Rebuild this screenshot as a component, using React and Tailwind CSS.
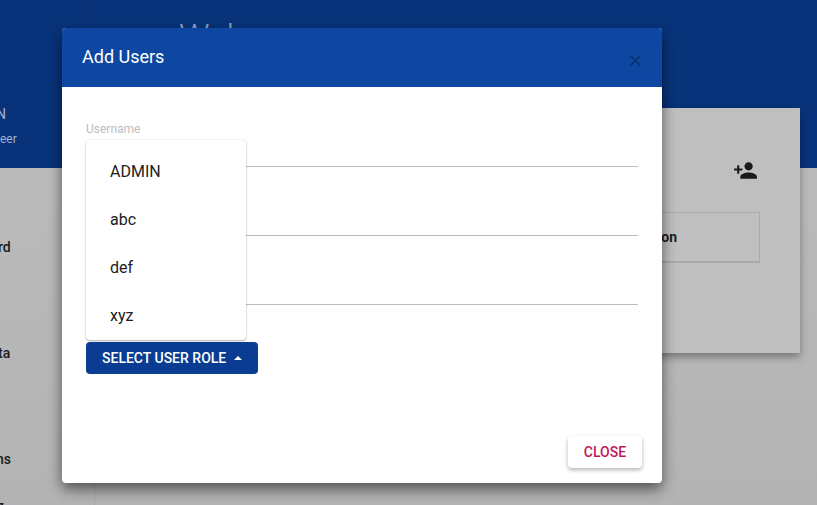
import React from "react";
import { MdPersonAdd, MdClose } from "react-icons/md";

function SideText({ className, children }) {
  return <p className={`absolute left-0 whitespace-nowrap ${className}`}>{children}</p>;
}

function InputLine({ label }) {
  return (
    <div className="h-[69px] flex flex-col justify-end">
      {label && <label className="text-xs leading-4 text-[#bdbdbd] mb-[29px]">{label}</label>}
      <div className="h-px bg-[#bdbdbd]" />
    </div>
  );
}

function RoleMenu() {
  const roles = ["ADMIN", "abc", "def", "xyz"];
  return (
    <ul className="absolute left-[24px] top-[53px] w-[160px] pt-2 bg-white rounded-sm shadow-[0_1px_2px_rgba(0,0,0,0.3),0_0_3px_rgba(0,0,0,0.08)]">
      {roles.map((role) => (
        <li key={role} className="h-[48px] flex items-center pl-6 text-base text-[#212121]">
          {role}
        </li>
      ))}
    </ul>
  );
}

export default function App() {
  return (
    <div className="relative h-[505px] overflow-hidden bg-gradient-to-b from-[#bfbfbf] to-[#b3b3b3] font-['Roboto',sans-serif]">
      {/* Page under the backdrop */}
      <header className="h-[168px] bg-[#08337a] flex">
        <div className="w-[95px] border-r border-[#0a2f6e]" />
        <h1 className="ml-[84px] mt-[16px] text-[34px] leading-10 font-light text-[#8fa3c4]">Wel</h1>
      </header>

      <aside className="absolute left-0 top-[168px] bottom-0 w-[95px] border-r border-[#a8a8a8] text-sm text-[#1c1c1c]">
        <SideText className="-top-[64px] -ml-[4px] text-[#9fb2d2]">N</SideText>
        <SideText className="-top-[37px] text-xs leading-4 text-[#9fb2d2]">eer</SideText>
        <SideText className="top-[69px] -ml-[2px] font-medium">rd</SideText>
        <SideText className="top-[175px] -ml-[2px] font-medium">ta</SideText>
        <SideText className="top-[281px] -ml-[4px] font-medium">ns</SideText>
        <SideText className="top-[328px] -ml-[3px] font-medium">z</SideText>
      </aside>

      <section className="absolute left-[96px] top-[108px] w-[704px] h-[245px] bg-[#bfbfbf] shadow-[0_4px_8px_rgba(0,0,0,0.35)] flex flex-col items-end pr-[40px]">
        <MdPersonAdd className="mt-[50px] mr-[2px] text-[#1a1a1a]" size={25} />
        <div className="mt-[29px] w-[400px] h-[51px] border border-[#a9a9a9] border-b-2 flex items-center justify-end pr-[82px] text-sm font-bold text-[#1c1c1c]">
          on
        </div>
      </section>

      {/* Modal */}
      <div className="absolute left-[62px] top-[28px] w-[600px] h-[455px] bg-white rounded-sm shadow-[0_6px_14px_rgba(0,0,0,0.55)] flex flex-col">
        <div className="h-[59px] bg-[#0d47a1] flex items-center justify-between pl-5 pr-[17px] rounded-t-sm">
          <h2 className="text-lg text-white -mt-[2px]">Add Users</h2>
          <MdClose className="mt-[6px] text-[#08306f]" size={19} />
        </div>

        <div className="relative flex-1 flex flex-col">
          <div className="px-6 pt-[11px]">
            <InputLine label="Username" />
            <InputLine />
            <InputLine />
            <button className="mt-[37px] w-[172px] h-8 bg-[#0a3d91] rounded-sm flex items-center pl-4 text-sm font-medium text-white">
              SELECT USER ROLE
              <span className="ml-[8px] border-x-[4px] border-b-[4px] border-x-transparent border-b-white" />
            </button>
          </div>
          <RoleMenu />
          <div className="mt-auto flex justify-end pr-5 pb-[15px]">
            <button className="w-[74px] h-8 bg-white rounded-sm text-sm font-medium text-[#c2185b] shadow-[0_2px_4px_rgba(0,0,0,0.3)]">
              CLOSE
            </button>
          </div>
        </div>
      </div>
    </div>
  );
}
